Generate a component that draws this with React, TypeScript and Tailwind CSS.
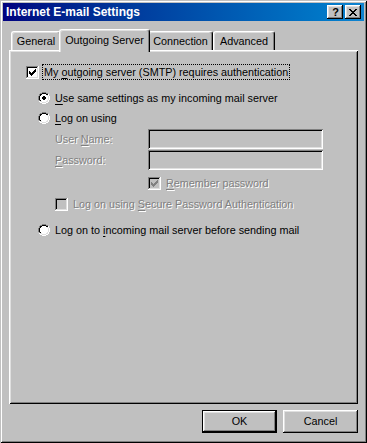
import React from "react";

type ColorMap = Record<string, string>;

function Pix({ rows, colors }: { rows: string[]; colors: ColorMap }) {
  const w = rows[0].length;
  const h = rows.length;
  const rects: React.ReactElement[] = [];
  rows.forEach((r, y) => {
    for (let x = 0; x < r.length; x++) {
      const c = colors[r[x]];
      if (c) rects.push(<rect key={`${x}-${y}`} x={x} y={y} width={1} height={1} fill={c} />);
    }
  });
  return (
    <svg width={w} height={h} viewBox={`0 0 ${w} ${h}`} shapeRendering="crispEdges" className="block shrink-0">
      {rects}
    </svg>
  );
}

const BASE: ColorMap = { G: "#808080", K: "#000000", W: "#ffffff", D: "#dfdfdf" };

const CHECK = [
  "......C",
  ".....CC",
  "C...CCC",
  "CC.CCC.",
  "CCCCC..",
  ".CCC...",
  "..C....",
];

function checkboxRows(checked: boolean): string[] {
  const rows: string[] = [];
  rows.push("GGGGGGGGGGGGW");
  rows.push("GKKKKKKKKKKDW");
  for (let i = 0; i < 9; i++) {
    const inner = "FFFFFFFFF".split("");
    if (checked && i >= 1 && i <= 7) {
      const c = CHECK[i - 1];
      for (let j = 0; j < 7; j++) if (c[j] === "C") inner[j + 1] = "C";
    }
    rows.push("GK" + inner.join("") + "DW");
  }
  rows.push("GDDDDDDDDDDDW");
  rows.push("WWWWWWWWWWWWW");
  return rows;
}

function Checkbox({ checked, disabled }: { checked: boolean; disabled?: boolean }) {
  return (
    <Pix
      rows={checkboxRows(checked)}
      colors={{ ...BASE, F: disabled ? "#c0c0c0" : "#ffffff", C: disabled ? "#808080" : "#000000" }}
    />
  );
}

const RADIO = [
  "....GGGG....",
  "..GGKKKKGG..",
  ".GKKFFFFKKW.",
  ".GKFFFFFFDW.",
  "GKFFFFFFFFDW",
  "GKFFFFFFFFDW",
  "GKFFFFFFFFDW",
  "GKFFFFFFFFDW",
  ".GKFFFFFFDW.",
  ".WDDFFFFDDW.",
  "..WWDDDDWW..",
  "....WWWW....",
];

function Radio({ checked }: { checked: boolean }) {
  const rows = RADIO.map((r, y) => {
    if (!checked) return r;
    const a = r.split("");
    if (y === 4 || y === 7) { a[5] = "C"; a[6] = "C"; }
    if (y === 5 || y === 6) { a[4] = "C"; a[5] = "C"; a[6] = "C"; a[7] = "C"; }
    return a.join("");
  });
  return <Pix rows={rows} colors={{ ...BASE, F: "#ffffff", C: "#000000" }} />;
}

const CLOSE_X = [
  "KK....KK",
  ".KK..KK.",
  "..KKKK..",
  "...KK...",
  "..KKKK..",
  ".KK..KK.",
  "KK....KK",
];

const font = "font-['Liberation_Sans',Arial,sans-serif]";
const disabledText = "text-[#808080] [text-shadow:1px_1px_0_#ffffff]";

function CaptionButton({ children }: { children: React.ReactNode }) {
  return (
    <div className="w-[16px] h-[14px] bg-[#c0c0c0] flex items-center justify-center shadow-[inset_-1px_-1px_#000000,inset_1px_1px_#ffffff,inset_-2px_-2px_#808080,inset_2px_2px_#dfdfdf]">
      {children}
    </div>
  );
}

function Tab({ label, width, selected }: { label: string; width: number; selected?: boolean }) {
  if (selected) {
    return (
      <div
        className="relative z-10 -mx-[2px] -mb-[2px] h-[23px] pb-[2px] bg-[#c0c0c0] border-l border-t border-white border-r border-r-black rounded-t-[3px] shadow-[inset_-1px_0_#808080,inset_1px_1px_#dfdfdf] flex items-center justify-center"
        style={{ width }}
      >
        <span className="leading-none">{label}</span>
      </div>
    );
  }
  return (
    <div
      className="h-[19px] bg-[#c0c0c0] border-l border-t border-white border-r border-r-black rounded-t-[3px] shadow-[inset_-1px_0_#808080,inset_1px_1px_#dfdfdf] flex items-center justify-center"
      style={{ width }}
    >
      <span className="leading-none">{label}</span>
    </div>
  );
}

export default function App() {
  return (
    <div
      className={`${font} text-[10.8px] text-black w-[367px] h-[443px] bg-[#c0c0c0] p-[3px] flex flex-col shadow-[inset_1px_1px_#c0c0c0,inset_-1px_-1px_#000000,inset_2px_2px_#ffffff,inset_-2px_-2px_#808080]`}
    >
      {/* Title bar */}
      <div className="h-[18px] shrink-0 flex items-center pl-[3px] pr-[3px] bg-gradient-to-r from-[#000080] to-[#1084d0]">
        <span className="text-white font-bold text-[12px] leading-none flex-1">Internet E-mail Settings</span>
        <div className="flex gap-[2px]">
          <CaptionButton>
            <span className="font-bold text-[11px] leading-none text-black pl-[1px]">?</span>
          </CaptionButton>
          <CaptionButton>
            <Pix rows={CLOSE_X} colors={BASE} />
          </CaptionButton>
        </div>
      </div>

      {/* Tabs + panel */}
      <div className="mt-[8px] px-[6px] flex flex-col">
        <div className="h-[21px] flex items-end pl-[2px]">
          <Tab label="General" width={50} />
          <Tab label="Outgoing Server" width={91} selected />
          <Tab label="Connection" width={65} />
          <Tab label="Advanced" width={62} />
        </div>
        <div className="h-[354px] bg-[#c0c0c0] shadow-[inset_1px_1px_#ffffff,inset_-1px_-1px_#000000,inset_2px_2px_#dfdfdf,inset_-2px_-2px_#808080] pt-[14px] pl-[17px] flex flex-col">
          <div className="h-[16px] flex items-center">
            <Checkbox checked />
            <span className="ml-[3px] h-[16px] px-[1px] flex items-center border border-dotted border-black leading-none">
              My&nbsp;<u className="underline-offset-2">o</u>utgoing server (SMTP) requires authentication
            </span>
          </div>
          <div className="mt-[10px] h-[16px] pl-[12px] flex items-center">
            <Radio checked />
            <span className="ml-[5px] leading-none">
              <u className="underline-offset-2">U</u>se same settings as my incoming mail server
            </span>
          </div>
          <div className="mt-[4px] h-[16px] pl-[12px] flex items-center">
            <Radio checked={false} />
            <span className="ml-[5px] leading-none">
              <u className="underline-offset-2">L</u>og on using
            </span>
          </div>
          <div className="mt-[3px] h-[20px] pl-[29px] flex items-center">
            <span className={`w-[93px] leading-none ${disabledText}`}>
              User <u className="underline-offset-2">N</u>ame:
            </span>
            <div className="w-[175px] h-[20px] bg-[#c0c0c0] shadow-[inset_1px_1px_#808080,inset_-1px_-1px_#ffffff,inset_2px_2px_#000000,inset_-2px_-2px_#dfdfdf]" />
          </div>
          <div className="mt-[1px] h-[20px] pl-[29px] flex items-center">
            <span className={`w-[93px] leading-none ${disabledText}`}>
              <u className="underline-offset-2">P</u>assword:
            </span>
            <div className="w-[175px] h-[20px] bg-[#c0c0c0] shadow-[inset_1px_1px_#808080,inset_-1px_-1px_#ffffff,inset_2px_2px_#000000,inset_-2px_-2px_#dfdfdf]" />
          </div>
          <div className="mt-[5px] h-[16px] pl-[122px] flex items-center">
            <Checkbox checked disabled />
            <span className={`ml-[5px] leading-none ${disabledText}`}>
              <u className="underline-offset-2">R</u>emember password
            </span>
          </div>
          <div className="mt-[5px] h-[16px] pl-[29px] flex items-center">
            <Checkbox checked={false} disabled />
            <span className={`ml-[5px] leading-none ${disabledText}`}>
              Log on using <u className="underline-offset-2">S</u>ecure Password Authentication
            </span>
          </div>
          <div className="mt-[10px] h-[16px] pl-[12px] flex items-center">
            <Radio checked={false} />
            <span className="ml-[5px] leading-none">
              Log on to <u className="underline-offset-2">i</u>ncoming mail server before sending mail
            </span>
          </div>
        </div>
      </div>

      <div className="mt-[6px] px-[6px] flex justify-end gap-[6px]">
        <div className="w-[75px] h-[23px] border border-black flex items-center justify-center shadow-[inset_-1px_-1px_#000000,inset_1px_1px_#ffffff,inset_-2px_-2px_#808080,inset_2px_2px_#dfdfdf]">
          <span className="leading-none">OK</span>
        </div>
        <div className="w-[75px] h-[23px] flex items-center justify-center shadow-[inset_-1px_-1px_#000000,inset_1px_1px_#ffffff,inset_-2px_-2px_#808080,inset_2px_2px_#dfdfdf]">
          <span className="leading-none">Cancel</span>
        </div>
      </div>
    </div>
  );
}
